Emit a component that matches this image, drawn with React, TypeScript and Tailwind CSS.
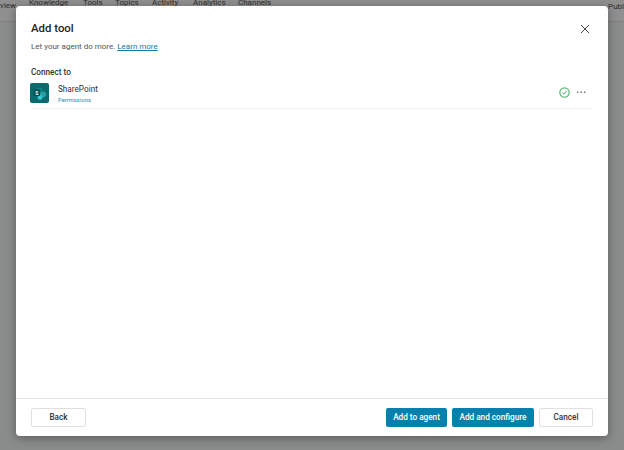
const tabs = [
  { label: "Knowledge", width: "w-[54px]" },
  { label: "Tools", width: "w-[32px]" },
  { label: "Topics", width: "w-[37px]" },
  { label: "Activity", width: "w-[41px]" },
  { label: "Analytics", width: "w-[45px]" },
  { label: "Channels", width: "w-[50px]" },
];

const SharePointIcon = () => (
  <svg width="19" height="20" viewBox="0 0 19 20" className="-ml-[1px] shrink-0">
    <rect width="19" height="20" rx="2" fill="#0b6a6d" />
    <circle cx="9.5" cy="8" r="3.4" fill="#0f7f83" />
    <circle cx="13" cy="11.5" r="3" fill="#2aa0a4" />
    <circle cx="10" cy="14.5" r="2.4" fill="#37c6d0" />
    <rect x="3.5" y="6.5" width="6.5" height="6.5" rx="1" fill="#064e50" />
    <text x="6.7" y="11.5" fontSize="5" fontWeight="700" fill="#ffffff" textAnchor="middle" fontFamily="Roboto, sans-serif">S</text>
  </svg>
);

const Button = ({ label, primary, width }: { label: string; primary?: boolean; width: string }) => (
  <button
    className={
      primary
        ? `h-[19px] ${width} rounded-[2px] bg-[#0680ac] text-[8.2px] font-medium text-white`
        : `h-[19px] ${width} rounded-[2px] border border-[#e0e0e0] bg-white text-[8.2px] font-medium text-[#333333]`
    }
  >
    {label}
  </button>
);

export default function App() {
  return (
    <div className="relative h-[450px] w-[624px] overflow-hidden bg-[#8a8c8c] font-['Roboto',sans-serif]">
      <div className="flex h-[22px] items-start border-b border-[#7f8181] bg-[#8f8f8f] text-[8px] text-[#2d2d2d]">
        <span className="w-[29px] shrink-0 pt-[1px] leading-[10px]">view</span>
        <div className="-mt-[2px] flex">
          {tabs.map((tab) => (
            <span key={tab.label} className={`${tab.width} shrink-0 leading-[10px]`}>
              {tab.label}
            </span>
          ))}
        </div>
        <span className="ml-auto pt-[2px] leading-[10px]">Publ</span>
      </div>

      <div className="absolute left-[16px] top-[6px] flex h-[430px] w-[592px] flex-col rounded-[4px] bg-white shadow-[0_2px_10px_rgba(0,0,0,0.35)]">
        <div className="flex flex-1 flex-col px-[15px] pt-[13px]">
          <div className="flex items-start justify-between">
            <h1 className="text-[11.4px] font-medium leading-[18px] text-[#242424]">Add tool</h1>
            <svg width="10" height="10" viewBox="0 0 10 10" className="mr-[3px] mt-[5px]">
              <path d="M1 1 L9 9 M9 1 L1 9" stroke="#444444" strokeWidth="1" fill="none" />
            </svg>
          </div>
          <p className="mt-[4px] text-[8px] leading-[12px] text-[#555555]">
            Let your agent do more. <span className="text-[#0f7c9e] underline">Learn more</span>
          </p>
          <p className="mt-[13px] text-[8.2px] font-medium leading-[12px] text-[#333333]">Connect to</p>
          <div className="mt-[5px] flex h-[26px] items-start border-b border-[#f2f2f2]">
            <SharePointIcon />
            <div className="ml-[9px] flex flex-col pt-[1px]">
              <span className="text-[8.2px] leading-[11px] text-[#333333]">SharePoint</span>
              <span className="mt-[1px] text-[6px] leading-[8px] text-[#2a8cb5]">Permissions</span>
            </div>
            <div className="ml-auto mr-[7px] flex items-center gap-[7px] pt-[4px]">
              <svg width="11" height="11" viewBox="0 0 11 11">
                <circle cx="5.5" cy="5.5" r="4.7" fill="none" stroke="#5cb978" strokeWidth="1.2" />
                <path d="M3.4 5.7 L4.9 7.1 L7.6 4" fill="none" stroke="#4b8f5f" strokeWidth="0.9" />
              </svg>
              <svg width="9" height="3" viewBox="0 0 9 3">
                <rect x="0" y="0.5" width="1.5" height="1.5" fill="#777777" />
                <rect x="3.5" y="0.5" width="1.5" height="1.5" fill="#777777" />
                <rect x="7" y="0.5" width="1.5" height="1.5" fill="#777777" />
              </svg>
            </div>
          </div>
        </div>
        <div className="flex h-[38px] items-start justify-between border-t border-[#e2e2e2] px-[15px] pt-[9px]">
          <Button label="Back" width="w-[55px]" />
          <div className="flex gap-[5px]">
            <Button label="Add to agent" primary width="w-[61px]" />
            <Button label="Add and configure" primary width="w-[82px]" />
            <Button label="Cancel" width="w-[54px]" />
          </div>
        </div>
      </div>
    </div>
  );
}
